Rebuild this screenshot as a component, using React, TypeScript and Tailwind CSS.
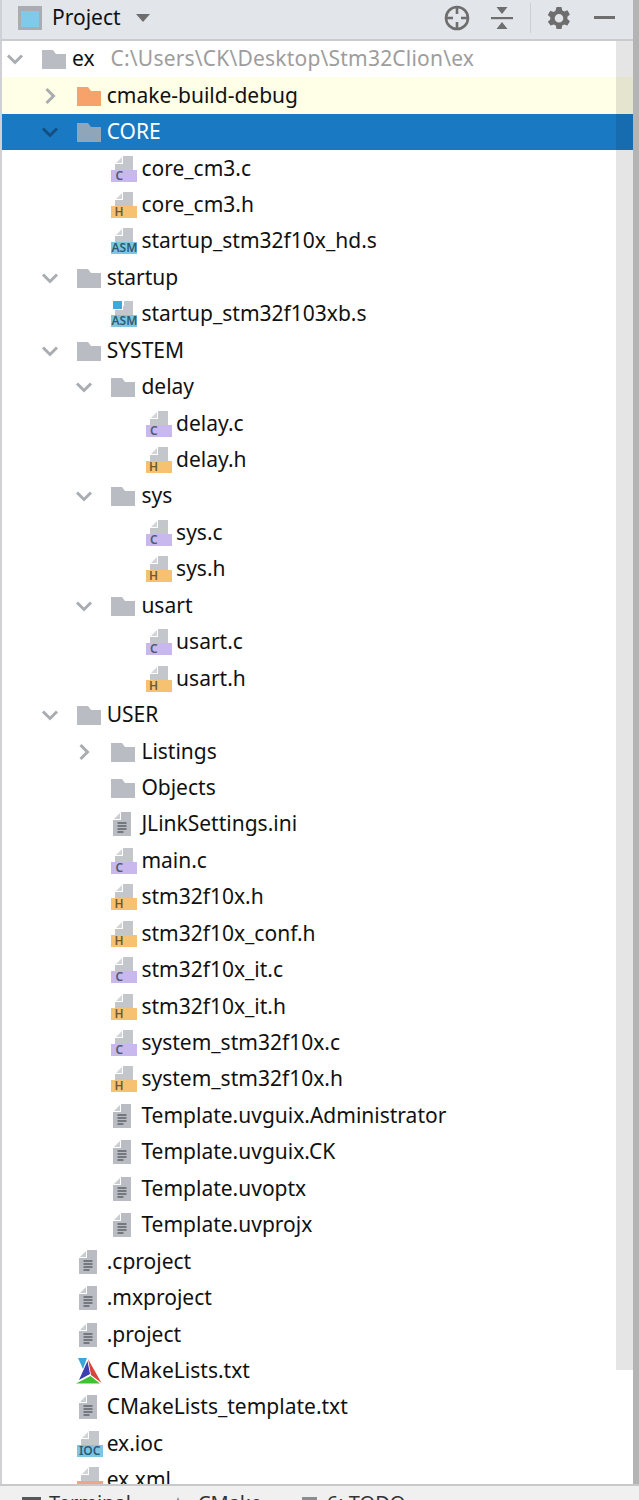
import React from 'react';

type Kind = 'folder' | 'orange' | 'c' | 'h' | 'asm' | 'asmBlue' | 'text' | 'cmake' | 'ioc' | 'xml';

type Row = {
    name: string;
    level: number;
    icon: Kind;
    arrow?: 'open' | 'closed';
    hint?: string;
    tone?: 'excluded' | 'selected';
};

const rows: Row[] = [
    { name: 'ex', level: 0, icon: 'folder', arrow: 'open', hint: 'C:\\Users\\CK\\Desktop\\Stm32Clion\\ex' },
    { name: 'cmake-build-debug', level: 1, icon: 'orange', arrow: 'closed', tone: 'excluded' },
    { name: 'CORE', level: 1, icon: 'folder', arrow: 'open', tone: 'selected' },
    { name: 'core_cm3.c', level: 2, icon: 'c' },
    { name: 'core_cm3.h', level: 2, icon: 'h' },
    { name: 'startup_stm32f10x_hd.s', level: 2, icon: 'asm' },
    { name: 'startup', level: 1, icon: 'folder', arrow: 'open' },
    { name: 'startup_stm32f103xb.s', level: 2, icon: 'asmBlue' },
    { name: 'SYSTEM', level: 1, icon: 'folder', arrow: 'open' },
    { name: 'delay', level: 2, icon: 'folder', arrow: 'open' },
    { name: 'delay.c', level: 3, icon: 'c' },
    { name: 'delay.h', level: 3, icon: 'h' },
    { name: 'sys', level: 2, icon: 'folder', arrow: 'open' },
    { name: 'sys.c', level: 3, icon: 'c' },
    { name: 'sys.h', level: 3, icon: 'h' },
    { name: 'usart', level: 2, icon: 'folder', arrow: 'open' },
    { name: 'usart.c', level: 3, icon: 'c' },
    { name: 'usart.h', level: 3, icon: 'h' },
    { name: 'USER', level: 1, icon: 'folder', arrow: 'open' },
    { name: 'Listings', level: 2, icon: 'folder', arrow: 'closed' },
    { name: 'Objects', level: 2, icon: 'folder' },
    { name: 'JLinkSettings.ini', level: 2, icon: 'text' },
    { name: 'main.c', level: 2, icon: 'c' },
    { name: 'stm32f10x.h', level: 2, icon: 'h' },
    { name: 'stm32f10x_conf.h', level: 2, icon: 'h' },
    { name: 'stm32f10x_it.c', level: 2, icon: 'c' },
    { name: 'stm32f10x_it.h', level: 2, icon: 'h' },
    { name: 'system_stm32f10x.c', level: 2, icon: 'c' },
    { name: 'system_stm32f10x.h', level: 2, icon: 'h' },
    { name: 'Template.uvguix.Administrator', level: 2, icon: 'text' },
    { name: 'Template.uvguix.CK', level: 2, icon: 'text' },
    { name: 'Template.uvoptx', level: 2, icon: 'text' },
    { name: 'Template.uvprojx', level: 2, icon: 'text' },
    { name: '.cproject', level: 1, icon: 'text' },
    { name: '.mxproject', level: 1, icon: 'text' },
    { name: '.project', level: 1, icon: 'text' },
    { name: 'CMakeLists.txt', level: 1, icon: 'cmake' },
    { name: 'CMakeLists_template.txt', level: 1, icon: 'text' },
    { name: 'ex.ioc', level: 1, icon: 'ioc' },
    { name: 'ex.xml', level: 1, icon: 'xml' },
];

const Chevron = ({ open, color }: { open: boolean; color: string }) => (
    <svg width="18" height="18" viewBox="0 0 18 18" fill="none" stroke={color} strokeWidth="3">
        <path d={open ? 'M2 5.5 9 12.5 16 5.5' : 'M5.5 2 12.5 9 5.5 16'} />
    </svg>
);

const Folder = ({ color }: { color: string }) => (
    <svg width="26" height="22" viewBox="0 0 26 22">
        <path d="M1 2h11l3 4h10v15H1z" fill={color} />
    </svg>
);

const Badge = ({ label, className }: { label: string; className: string }) => (
    <div className={`absolute bottom-0 left-0 h-[12px] w-[26px] flex items-center font-semibold text-[12px] leading-none ${className}`}>
        {label}
    </div>
);

const FileIcon = ({ kind }: { kind: Kind }) => {
    if (kind === 'text') {
        return (
            <svg width="18" height="24" viewBox="0 0 18 24" className="ml-[3px]">
                <path d="M8 0h10v24H0V8h8z" fill="#b9bdc3" />
                <path d="M1 7 7 1v6z" fill="#c9ccd0" />
                <path d="M4.500 11h9M4.500 14h9M4.500 17h9M4.500 20h6" stroke="#5f6368" strokeWidth="1.300" />
            </svg>
        );
    }
    if (kind === 'cmake') {
        return (
            <svg width="26" height="26" viewBox="0 0 26 26">
                <path d="M2 0h9L7 11z" fill="#3aa7d8" />
                <path d="M12 1 25.500 25 15 17z" fill="#d9453d" />
                <path d="M11.500 3 14 16 3 22z" fill="#3b3fb0" />
                <path d="M0 25.500 14.500 18 24 25.500z" fill="#3fc22f" />
            </svg>
        );
    }
    return (
        <div className="relative ml-[1px] w-[26px] h-[26px]">
            {kind === 'asmBlue' ? (
                <>
                    <div className="absolute top-[5px] left-[4px] w-[18px] h-[11px] bg-[#c3c6cb]" />
                    <div className="absolute top-0 left-[13px] w-[9px] h-[8px] bg-[#c3c6cb]" />
                    <div className="absolute top-0 left-[2px] w-[9px] h-[8px] bg-[#3fa9dc] ring-1 ring-white" />
                </>
            ) : (
                <svg width="18" height="16" viewBox="0 0 18 16" className="absolute top-0 left-[4px]">
                    <path d="M8 0h10v16H0V8h8z" fill="#c3c6cb" />
                    <path d="M1 7 7 1v6z" fill="#d2d4d8" />
                </svg>
            )}
            {kind === 'c' && <Badge label="C" className="pl-[4px] bg-[#c9b8ee] text-[#4e5a70]" />}
            {kind === 'h' && <Badge label="H" className="pl-[3px] bg-[#f6c272] text-[#6b5a36]" />}
            {(kind === 'asm' || kind === 'asmBlue') && <Badge label="ASM" className="justify-center text-[11px] bg-[#7cc6e4] text-[#2f5a72]" />}
            {kind === 'ioc' && <Badge label="IOC" className="justify-center text-[11px] bg-[#7cc6e4] text-[#2f5a72]" />}
            {kind === 'xml' && <Badge label="" className="bg-[#f0a583]" />}
        </div>
    );
};

const TreeRow = ({ row }: { row: Row }) => {
    const selected = row.tone === 'selected';
    const isFolder = row.icon === 'folder' || row.icon === 'orange';
    return (
        <div
            className={`flex items-center h-[36.45px] whitespace-nowrap ${
                selected ? 'bg-[#1a79c3] text-white' : row.tone === 'excluded' ? 'bg-[#fffee6] text-[#111]' : 'text-[#111]'
            }`}
        >
            <div className="w-[18px] h-[18px] shrink-0 flex items-center justify-center" style={{ marginLeft: row.level * 34.7 + 6 }}>
                {row.arrow && <Chevron open={row.arrow === 'open'} color={selected ? '#14507f' : '#a9adb2'} />}
            </div>
            <div className="ml-[17px] w-[29px] shrink-0 flex items-center">
                {isFolder ? (
                    <Folder color={row.icon === 'orange' ? '#f8a26b' : selected ? '#8fa5ba' : '#b9bdc3'} />
                ) : (
                    <FileIcon kind={row.icon} />
                )}
            </div>
            <span className="ml-[2px] pb-[1px] text-[21px] leading-none">{row.name}</span>
            {row.hint && <span className="ml-[16px] pb-[1px] text-[21px] leading-none tracking-[0.2px] text-[#9d9d9d]">{row.hint}</span>}
        </div>
    );
};

const App: React.FC = () => {
    return (
        <div className="relative w-[639px] h-[1500px] overflow-hidden flex flex-col bg-white font-['Noto_Sans','Open_Sans',sans-serif]">
            <header className="flex items-center h-[41px] shrink-0 bg-[#e2e5ea] border-b-2 border-[#c9cbce] border-l-2 border-l-[#cfd1d4] pl-[16px] pr-[24px] pb-[4px]">
                <div className="w-[24px] h-[24px] border-[3px] border-[#a9adb2] border-t-[5px] bg-[#7fcaea]" />
                <span className="ml-[10px] text-[21px] leading-none text-[#111]">Project</span>
                <svg width="14" height="8" viewBox="0 0 14 8" className="ml-[15px]">
                    <path d="M0 0h14L7 8z" fill="#6e6e6e" />
                </svg>
                <div className="ml-auto flex items-center">
                    <svg width="26" height="26" viewBox="0 0 26 26" fill="none" stroke="#6e6e6e" strokeWidth="2.600">
                        <circle cx="13" cy="13" r="11" />
                        <path d="M13 2v7M13 17v7M2 13h7M17 13h7" />
                    </svg>
                    <svg width="22" height="24" viewBox="0 0 22 24" className="ml-[21px]">
                        <path d="M0 11h22v2.200H0z" fill="#6e6e6e" />
                        <path d="M5.500 1h11L11 8zM5.500 23h11L11 16z" fill="#6e6e6e" />
                    </svg>
                    <div className="ml-[17px] w-[1px] h-[30px] bg-[#cdd0d4]" />
                    <svg width="24" height="24" viewBox="0 0 24 24" className="ml-[16px]" fill="#6e6e6e" fillRule="evenodd">
                        <path d="M9.500 1h5l.7 3.300 2 1.100 3.200-1.100 2.500 4.300-2.500 2.200v2.300l2.500 2.200-2.500 4.300-3.200-1.100-2 1.100-.7 3.300h-5l-.7-3.300-2-1.100-3.200 1.100L.8 15.800l2.500-2.200v-2.300L.8 9.100l2.500-4.300 3.200 1.100 2-1.100zM12 8a4.300 4.300 0 1 0 0 8.600A4.300 4.300 0 0 0 12 8z" />
                    </svg>
                    <div className="ml-[23px] w-[21px] h-[3px] bg-[#6e6e6e]" />
                </div>
            </header>
            <div className="relative flex-1 min-h-0 overflow-hidden border-l-2 border-[#cfd1d4]">
                <div className="-ml-[2px]">
                    {rows.map((row) => (
                        <TreeRow key={row.name} row={row} />
                    ))}
                </div>
                {/* scrollbar thumb lies over the rows */}
                <div className="absolute top-0 right-[6px] w-[17px] h-[1329px] bg-[#000]/10" />
            </div>
            <footer className="flex items-start h-[16px] shrink-0 overflow-hidden bg-[#f0f0f0] border-t-2 border-[#c9c9c9] pl-[22px] pt-[11px] text-[20px] leading-none text-[#333] whitespace-nowrap">
                <div className="w-[19px] h-[14px] shrink-0 bg-[#55585c]" />
                <span className="ml-[8px] -mt-[4px]">Terminal</span>
                <svg width="10" height="12" viewBox="0 0 10 12" className="ml-[42px] shrink-0">
                    <path d="M5 0 10 12H0z" fill="#8a8d91" />
                </svg>
                <span className="ml-[15px] -mt-[4px]">CMake</span>
                <div className="ml-[40px] w-[15px] h-[14px] shrink-0 bg-[#8a8d91]" />
                <span className="ml-[10px] -mt-[4px]">6: TODO</span>
            </footer>
            {/* window edge runs down to the tool strip */}
            <div className="absolute top-0 right-0 h-[1484px] w-[6px] bg-[#b4b4b4]" />
        </div>
    );
};

export default App;
